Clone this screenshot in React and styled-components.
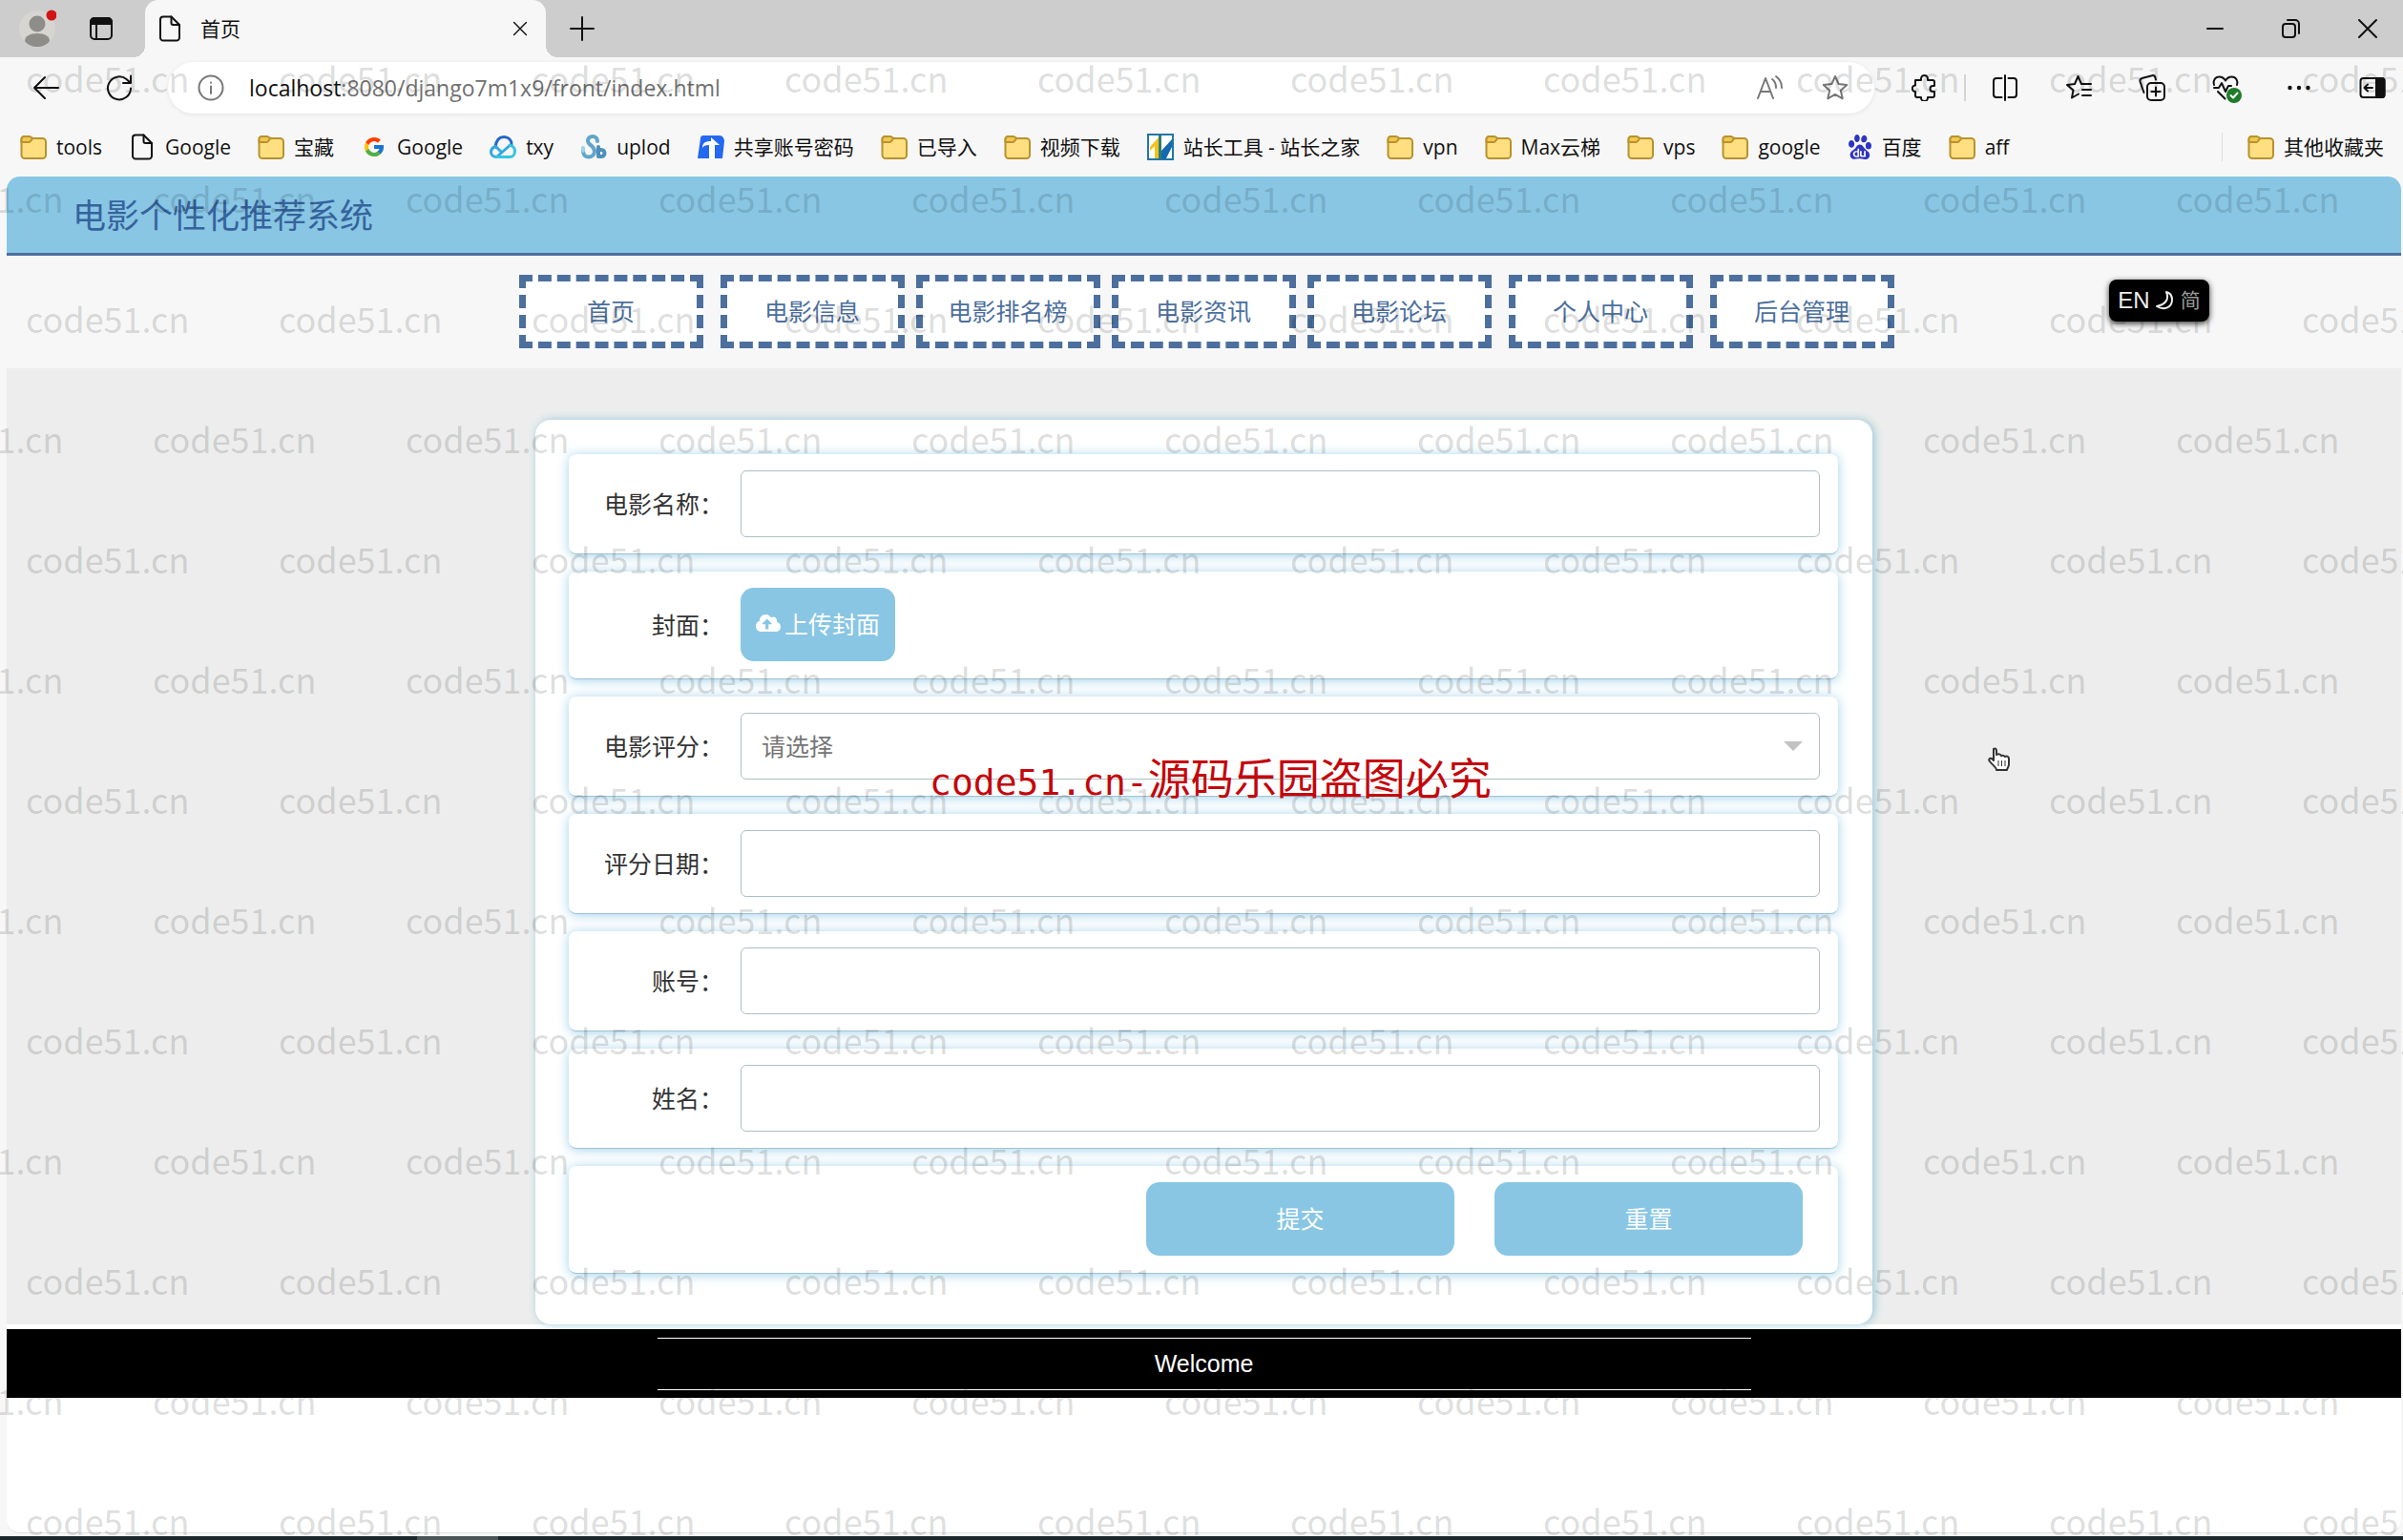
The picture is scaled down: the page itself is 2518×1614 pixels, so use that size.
import React from 'react';
import styled, { createGlobalStyle } from 'styled-components';
import { FcGoogle } from 'react-icons/fc';
import { SiBaidu } from 'react-icons/si';
import { FaCloudUploadAlt } from 'react-icons/fa';

const cjk = `"Noto Sans CJK SC", sans-serif`;
const ui = `"Open Sans", "Noto Sans CJK SC", sans-serif`;
const sky = '#88c6e4';
const navy = '#4c6f9e';

const GlobalStyle = createGlobalStyle`
  *, *::before, *::after { box-sizing: border-box; }
  body { margin: 0; font-family: ${cjk}; color: #333; }
  button { border: 0; padding: 0; background: none; font: inherit; color: inherit; cursor: pointer; }
  a { color: inherit; text-decoration: none; }
  svg { display: block; flex: none; }
`;

/* ---------- window ---------- */

const Window = styled.div`
  position: relative;
  display: flex;
  flex-direction: column;
  min-height: 100vh;
  overflow: hidden;
  background: #f7f7f7;
`;

const TabStrip = styled.header`
  display: flex;
  align-items: center;
  height: 60px;
  padding-right: 25px;
  background: #cdcdcd;
  color: #111;
`;

const StripTools = styled.div`
  display: flex;
  align-items: center;
  gap: 34px;
  width: 152px;
  padding-left: 19px;
`;

const Tab = styled.div`
  position: relative;
  display: flex;
  align-items: center;
  align-self: stretch;
  width: 420px;
  padding: 0 17px 0 12px;
  border-radius: 14px 14px 0 0;
  background: #f7f7f7;

  &::before,
  &::after {
    content: '';
    position: absolute;
    bottom: 0;
    width: 12px;
    height: 12px;
  }
  &::before {
    right: 100%;
    background: radial-gradient(circle at 0 0, transparent 12px, #f7f7f7 12px);
  }
  &::after {
    left: 100%;
    background: radial-gradient(circle at 100% 0, transparent 12px, #f7f7f7 12px);
  }
`;

const TabTitle = styled.span`
  flex: 1;
  margin-left: 18px;
  padding-bottom: 2px;
  font-size: 21px;
  line-height: 30px;
`;

const NewTab = styled.button`
  margin-left: 24px;
`;

const WindowControls = styled.div`
  display: flex;
  gap: 56px;
  margin-left: auto;
`;

const Toolbar = styled.div`
  display: flex;
  align-items: center;
  height: 64px;
  padding: 0 18px 0 34px;
  color: #111;
`;

const ToolGroup = styled.div`
  display: flex;
  align-items: center;
  gap: 49px;
`;

const AddressBar = styled.div`
  display: flex;
  flex: 1;
  align-items: center;
  height: 54px;
  margin: 0 39px 0 37px;
  padding: 0 27px 0 31px;
  border-radius: 27px;
  background: #fff;
  box-shadow: 0 1px 5px rgba(0, 0, 0, 0.08);
  color: #777;
`;

const Url = styled.span`
  flex: 1;
  margin-left: 26px;
  font: 23px/32px ${ui};
  color: #707070;
`;

const Host = styled.span`
  color: #111;
`;

const AddressTools = styled.div`
  display: flex;
  gap: 41px;
`;

const Divider = styled.span`
  width: 2px;
  height: 28px;
  margin: 0 27px;
  background: #d4d4d4;
`;

const Bookmarks = styled.nav`
  display: flex;
  align-items: center;
  gap: 28px;
  height: 61px;
  padding: 0 20px 2px 21px;
`;

const Bookmark = styled.a`
  display: flex;
  align-items: center;
  gap: 10px;
  font: 21px/30px ${ui};
  color: #111;
  white-space: nowrap;
`;

const OtherBookmarks = styled.div`
  display: flex;
  align-items: center;
  margin-left: auto;
  padding-left: 26px;
  border-left: 1px solid #dcdcdc;
`;

const TaskStrip = styled.div`
  height: 4px;
  padding-left: 437px;
  background: #1c272b;
`;

const TaskActive = styled.div`
  width: 85px;
  height: 4px;
  background: #4b5457;
`;

/* ---------- site ---------- */

const Page = styled.div`
  flex: 1;
  margin: 0 2px 3px 7px;
  overflow: hidden;
  border-bottom: 1px solid #e0e4e4;
  border-radius: 14px;
  background: #fff;
`;

const Banner = styled.header`
  display: flex;
  align-items: center;
  height: 83px;
  padding: 0 0 2px 69px;
  border-bottom: 3px solid ${navy};
  background: ${sky};
`;

const SiteTitle = styled.h1`
  margin: 0;
  font-size: 35px;
  font-weight: 400;
  line-height: 50px;
  color: #36639c;
`;

const SiteNav = styled.nav`
  display: flex;
  justify-content: center;
  padding: 20px 0 21px 5px;
  background: #f7f7f7;
`;

const NavLink = styled.a`
  display: flex;
  align-items: center;
  justify-content: center;
  width: 193px;
  height: 77px;
  margin-right: ${(p) => (p.$tight ? 12 : 18)}px;
  padding-bottom: 3px;
  border: 7px dashed ${navy};
  background: #fff;
  font-size: 25px;
  line-height: 36px;
  color: ${navy};

  &:last-child { margin-right: 0; }
`;

const Main = styled.main`
  padding-top: 54px;
  background: #ededed;
`;

const Panel = styled.form`
  display: flex;
  flex-direction: column;
  gap: 18px;
  width: 90%;
  max-width: 1401px;
  margin: 0 auto;
  padding: 36px 36px 53px 35px;
  border-radius: 16px;
  background: #fff;
  box-shadow: 2px 0 10px rgba(110, 185, 205, 0.7);
`;

const Row = styled.div`
  display: flex;
  align-items: center;
  padding: 17px 19px ${(p) => (p.$tall ? 18 : 17)}px 0;
  border-bottom: 1px solid #9fc3d2;
  border-radius: 8px;
  background: #fff;
  box-shadow: 0 1px 12px rgba(120, 190, 225, 0.7);
`;

const Label = styled.label`
  width: 180px;
  padding: 0 18px 2px 0;
  font-size: 25px;
  line-height: 36px;
  text-align: right;
`;

const fieldBox = `
  flex: 1;
  min-width: 0;
  height: 70px;
  padding: 0 21px 2px;
  border: 1px solid #aebfc4;
  border-radius: 6px;
  background: #fff;
  font: 25px/36px ${cjk};
  color: #757575;
  outline: 0;
`;

const TextInput = styled.input`${fieldBox}`;

const SelectWrap = styled.div`
  display: flex;
  flex: 1;
  position: relative;

  &::after {
    content: '';
    position: absolute;
    top: 30px;
    right: 18px;
    border: 10px solid transparent;
    border-top-color: #c2c2c2;
    border-bottom: 0;
    pointer-events: none;
  }
`;

const Select = styled.select`
  ${fieldBox}
  appearance: none;
`;

const Button = styled.button`
  display: flex;
  align-items: center;
  justify-content: center;
  gap: 4px;
  height: 77px;
  padding: 0 16px 3px;
  border-radius: 14px;
  background: ${sky};
  font-size: 25px;
  line-height: 36px;
  color: #fff;
`;

const Actions = styled(Row)`
  justify-content: flex-end;
  gap: 42px;
  padding-right: 37px;

  ${Button} { width: 323px; }
`;

const Footer = styled.footer`
  margin-top: 5px;
  padding: 9px 0 8px;
  background: #000;
`;

const FooterText = styled.p`
  max-width: 1146px;
  margin: 0 auto;
  border: solid #fff;
  border-width: 1px 0;
  font: 25px/53px "Liberation Sans", sans-serif;
  text-align: center;
  color: #fff;
`;

/* ---------- overlays ---------- */

const Lang = styled.button`
  position: absolute;
  top: 293px;
  right: 203px;
  display: flex;
  align-items: center;
  justify-content: center;
  gap: 5px;
  width: 105px;
  height: 44px;
  border-radius: 8px;
  background: #000;
  box-shadow: 0 2px 6px rgba(0, 0, 0, 0.8);
  font: 24px/32px "Liberation Sans", ${cjk};
  color: #eee;
`;

const LangAlt = styled.span`
  font-size: 21px;
  color: #999;
`;

const Stamp = styled.div`
  position: absolute;
  top: 781px;
  left: 974px;
  font: 45px/66px ${cjk};
  color: #c4060c;
  white-space: nowrap;
  pointer-events: none;
`;

const StampLatin = styled.span`
  font: 38px/66px "DejaVu Sans Mono", monospace;
`;

const Pointer = styled.svg`
  position: absolute;
  top: 783px;
  left: 2082px;
`;

const Watermarks = styled.div`
  position: absolute;
  top: 18px;
  left: 0;
  width: 100%;
  pointer-events: none;
`;

const WatermarkRow = styled.div`
  display: flex;
  height: 126px;
  margin-left: ${(p) => (p.$shift ? -105 : 27)}px;
  font-size: 36px;
  line-height: 126px;
  color: rgba(0, 0, 0, 0.15);

  span { flex: 0 0 265px; }
`;

/* ---------- icons ---------- */

const Line = ({ children, size = 28, width = 2, box = 28, ...rest }) => (
  <svg width={size} height={size} viewBox={`0 0 ${box} ${box}`} fill="none" stroke="currentColor"
    strokeWidth={width} strokeLinecap="round" strokeLinejoin="round" aria-hidden="true" {...rest}>
    {children}
  </svg>
);

const Folder = () => (
  <Line stroke="#b8922f">
    <path d="M1.5 6a3 3 0 0 1 3-3H10l3.500 2h10a3.500 3.500 0 0 1 3.500 3.500v14a3.500 3.500 0 0 1-3.500 3.500H5a3.500 3.500 0 0 1-3.500-3.500z" fill="#ffdf80" />
    <path d="M1.500 9H9.500c2 0 2.500-3.500 4-4L10 3H4.500a3 3 0 0 0-3 3z" fill="#f0c850" />
  </Line>
);

const PageIcon = () => (
  <Line>
    <path d="M7 1.500h8.500L24 10v13.500a3 3 0 0 1-3 3H7a3 3 0 0 1-3-3v-19a3 3 0 0 1 3-3z" />
    <path d="M15.500 1.500V8a2 2 0 0 0 2 2H24" />
  </Line>
);

const Google = () => (
  <svg width="28" height="28" viewBox="0 0 28 28" aria-hidden="true"><FcGoogle x="2" y="2" size={24} /></svg>
);

const CloudLogo = () => (
  <Line width={3}>
    <path d="M6 14C7 7 10 3.500 15 3.500c4.500 0 8 3 8 8" stroke="#2367c9" />
    <path d="M12 19 6.500 13.500C3 14.500 1.500 17 1.500 19.500c0 3 2.500 5 6 5L21 12.500" stroke="#31a9e0" />
    <path d="M7.500 24.500H21c3.500 0 5.500-2.500 5.500-6S24 12 21 12.500" stroke="#35c5dd" />
  </Line>
);

const SwirlLogo = () => (
  <Line width={4}>
    <path d="M18 8c0-3-2-5-5-5s-5 2-5 4.500c0 5 7 5 7 11 0 4-3 6-6.500 6S3 22 3 18" stroke="#62a5c9" />
    <path d="M19 14v10h3a3.500 3.500 0 0 0 0-7h-3" stroke="#4d91ba" />
    <path d="M3 18v-3" stroke="#9bd4ec" />
  </Line>
);

const ShareLogo = () => (
  <svg width="28" height="28" viewBox="0 0 28 28" aria-hidden="true">
    <path d="M6 2h17c3 0 5 3 5 6l-2 18H0L3 5c0-2 1-3 3-3z" fill="#2468f2" />
    <path d="M14 4l9 8h-5v14h-6V12c-4 0-6 1-7 3 0-6 4-7 9-7z" fill="#fff" />
  </svg>
);

const ToolsLogo = () => (
  <svg width="28" height="28" viewBox="0 0 28 28" aria-hidden="true">
    <path d="M1 1h26v26H1z" fill="#fff" stroke="#2176a8" strokeWidth="2" />
    <path d="M3 14 13 3v23H8V13l-5 5z" fill="#f4c21c" />
    <path d="M12 2h3v24h-3z" fill="#2c7f75" />
    <path d="M15 26V18L26 6v8L20 26z" fill="#1469b0" />
  </svg>
);

const Baidu = () => <SiBaidu size={26} color="#2e33c2" />;

const Profile = () => (
  <svg width="40" height="42" viewBox="0 0 40 42" aria-hidden="true">
    <circle cx="20" cy="21" r="19" fill="#d7d5d2" />
    <circle cx="20" cy="16" r="8.500" fill="#8e8d8a" />
    <path d="M7 34c0-5 5-8 13-8s13 3 13 8c-3 4-8 6-13 6s-10-2-13-6z" fill="#8e8d8a" />
    <circle cx="35" cy="7" r="5.500" fill="#d21414" />
  </svg>
);

const TabActions = () => (
  <Line size={26} box={26}>
    <rect x="2" y="2" width="22" height="22" rx="4" />
    <path d="M2 8V6a4 4 0 0 1 4-4h14a4 4 0 0 1 4 4v2z" fill="currentColor" />
    <path d="M8 8v16" />
  </Line>
);

const starPath = 'M14 2l3.600 8 8.700.9-6.500 5.800 1.900 8.600L14 20.900l-7.700 4.400 1.900-8.600L1.700 10.900l8.700-.9z';

/* ---------- data ---------- */

const bookmarks = [
  [Folder, 'tools'], [PageIcon, 'Google'], [Folder, '宝藏'], [Google, 'Google'], [CloudLogo, 'txy'],
  [SwirlLogo, 'uplod'], [ShareLogo, '共享账号密码'], [Folder, '已导入'], [Folder, '视频下载'],
  [ToolsLogo, '站长工具 - 站长之家'], [Folder, 'vpn'], [Folder, 'Max云梯'], [Folder, 'vps'],
  [Folder, 'google'], [Baidu, '百度'], [Folder, 'aff'],
];

const navLinks = [
  ['首页', false], ['电影信息', true], ['电影排名榜', true], ['电影资讯', true],
  ['电影论坛', false], ['个人中心', false], ['后台管理', false],
];

const Field = ({ id, label }) => (
  <Row>
    <Label htmlFor={id}>{label}：</Label>
    <TextInput id={id} type="text" />
  </Row>
);

const BrowserChrome = () => (
  <>
    <TabStrip>
      <StripTools>
        <button aria-label="Profile"><Profile /></button>
        <button aria-label="Tab actions"><TabActions /></button>
      </StripTools>
      <Tab>
        <PageIcon />
        <TabTitle>首页</TabTitle>
        <button aria-label="Close tab"><Line size={20}><path d="M5 5l18 18M23 5L5 23" /></Line></button>
      </Tab>
      <NewTab aria-label="New tab"><Line><path d="M14 2v24M2 14h24" /></Line></NewTab>
      <WindowControls>
        <button aria-label="Minimize"><Line size={24} box={24}><path d="M4 12h16" /></Line></button>
        <button aria-label="Restore">
          <Line size={24} box={24}><rect x="3" y="7" width="13" height="14" rx="3" /><path d="M8 3h8a4 4 0 0 1 4 4v10" /></Line>
        </button>
        <button aria-label="Close"><Line size={24} box={24}><path d="M3 3l18 18M21 3L3 21" /></Line></button>
      </WindowControls>
    </TabStrip>

    <Toolbar>
      <ToolGroup>
        <button aria-label="Back"><Line><path d="M27 14H2M13 3L2 14l11 11" /></Line></button>
        <button aria-label="Reload"><Line><path d="M26 14.500A12 12 0 1 1 21.500 5L26 9M26 1.500V9h-8" /></Line></button>
      </ToolGroup>
      <AddressBar>
        <Line><circle cx="14" cy="14" r="12.500" /><path d="M14 12.500V20M14 8.500v.2" /></Line>
        <Url><Host>localhost</Host>:8080/django7m1x9/front/index.html</Url>
        <AddressTools>
          <button aria-label="Read aloud">
            <Line><path d="M2 25L10 4l8 21M5 18h10M17 5c3 2 4 5 4 9M21 2c4 3 6 7 6 12" /></Line>
          </button>
          <button aria-label="Add to favorites"><Line><path d={starPath} /></Line></button>
        </AddressTools>
      </AddressBar>
      <button aria-label="Extensions">
        <Line><path d="M4 6h6V4.500a3.500 3.500 0 0 1 7 0V6h5a2 2 0 0 1 2 2v4h-1.500a3 3 0 0 0 0 6H24v4a2 2 0 0 1-2 2h-5v.500a3.500 3.500 0 0 1-7 0V24H6a2 2 0 0 1-2-2v-4a3.200 3.200 0 0 1 0-6.500z" /></Line>
      </button>
      <Divider />
      <ToolGroup>
        <button aria-label="Split screen">
          <Line><path d="M10.500 4H5a3 3 0 0 0-3 3v14a3 3 0 0 0 3 3h5.500M17.500 4H23a3 3 0 0 1 3 3v14a3 3 0 0 1-3 3h-5.500M14 1v26" /></Line>
        </button>
        <button aria-label="Favorites">
          <Line><path d="M14 20.500l-7 4 1.500-8L2 11l8-1L13.500 2 17 10h10M18 16h9M18 22h9" /></Line>
        </button>
        <button aria-label="Collections">
          <Line><rect x="9" y="9" width="18" height="18" rx="4" /><path d="M18 13.500v9M13.500 18h9M5.500 19L1.500 7.500a3 3 0 0 1 2-3.500L14 1.200a3 3 0 0 1 3.500 2.300l.5 2" /></Line>
        </button>
        <button aria-label="Browser essentials">
          <Line overflow="visible">
            <path d="M2 11c-1.500-4 1-8.500 5.500-8.500 3 0 5 1.500 6.500 4 1.500-2.500 3.500-4 6.500-4 4.500 0 7 4.500 5.500 8.500M2 14h5l3-5 4 9 3-6h3M6 18l7.500 7.500" />
            <circle cx="23" cy="22" r="8" fill="#1e7b28" stroke="none" />
            <path d="M19.500 22l2.500 2.500 4.500-5" stroke="#fff" />
          </Line>
        </button>
        <button aria-label="Settings">
          <Line fill="currentColor" stroke="none"><circle cx="4.500" cy="14" r="2.200" /><circle cx="14" cy="14" r="2.200" /><circle cx="23.500" cy="14" r="2.200" /></Line>
        </button>
        <button aria-label="Sidebar">
          <Line><rect x="1.500" y="4" width="25" height="20" rx="3" /><path d="M18 4h6a2.500 2.500 0 0 1 2.500 2.500v15A2.500 2.500 0 0 1 24 24h-6z" fill="currentColor" /><path d="M14 14H6M9 10.500L5.500 14 9 17.500" /></Line>
        </button>
      </ToolGroup>
    </Toolbar>

    <Bookmarks aria-label="Bookmarks">
      {bookmarks.map(([Icon, name], i) => (
        <Bookmark key={i} href="#"><Icon />{name}</Bookmark>
      ))}
      <OtherBookmarks>
        <Bookmark href="#"><Folder />其他收藏夹</Bookmark>
      </OtherBookmarks>
    </Bookmarks>
  </>
);

export default function App() {
  return (
    <Window>
      <GlobalStyle />
      <BrowserChrome />

      <Page>
        <Banner><SiteTitle>电影个性化推荐系统</SiteTitle></Banner>
        <SiteNav>
          {navLinks.map(([name, tight]) => (
            <NavLink key={name} href="#" $tight={tight}>{name}</NavLink>
          ))}
        </SiteNav>
        <Main>
          <Panel onSubmit={(e) => e.preventDefault()}>
            <Field id="name" label="电影名称" />
            <Row $tall>
              <Label htmlFor="cover">封面：</Label>
              <Button type="button" id="cover"><FaCloudUploadAlt size={26} />上传封面</Button>
            </Row>
            <Row>
              <Label htmlFor="score">电影评分：</Label>
              <SelectWrap>
                <Select id="score"><option>请选择</option></Select>
              </SelectWrap>
            </Row>
            <Field id="date" label="评分日期" />
            <Field id="account" label="账号" />
            <Field id="fullname" label="姓名" />
            <Actions $tall>
              <Button type="submit">提交</Button>
              <Button type="reset">重置</Button>
            </Actions>
          </Panel>
        </Main>
        <Footer><FooterText>Welcome</FooterText></Footer>
      </Page>
      <TaskStrip><TaskActive /></TaskStrip>

      <Lang>
        EN
        <svg width="22" height="24" viewBox="0 0 22 24" aria-hidden="true">
          <path d="M12 3c3 7 0 13-10 15 8 5 16 1 16-7 0-4-2-7-6-8z" fill="none" stroke="#eee" strokeWidth="2" strokeLinejoin="round" />
        </svg>
        <LangAlt>简</LangAlt>
      </Lang>

      <Watermarks aria-hidden="true">
        {Array.from({ length: 13 }, (_, r) => (
          <WatermarkRow key={r} $shift={r % 2 === 1}>
            {Array.from({ length: 10 }, (_, c) => <span key={c}>code51.cn</span>)}
          </WatermarkRow>
        ))}
      </Watermarks>

      <Stamp><StampLatin>code51.cn-</StampLatin>源码乐园盗图必究</Stamp>

      <Pointer width="26" height="26" viewBox="0 0 26 26" aria-hidden="true">
        <path d="M7 2c2-1 3 0 3 2v4c2-1 4-1 5 1 2-1 3 0 4 1 2-1 4 0 4 2v6c0 3-2 4-2 6H10c0-3-4-5-7-9-2-2 0-4 2-3l2 2z" fill="#fff" stroke="#333" strokeWidth="2" strokeLinejoin="round" />
        <path d="M12 14v6M15.500 14v6M19 14v6" stroke="#333" strokeWidth="1" />
      </Pointer>
    </Window>
  );
}
